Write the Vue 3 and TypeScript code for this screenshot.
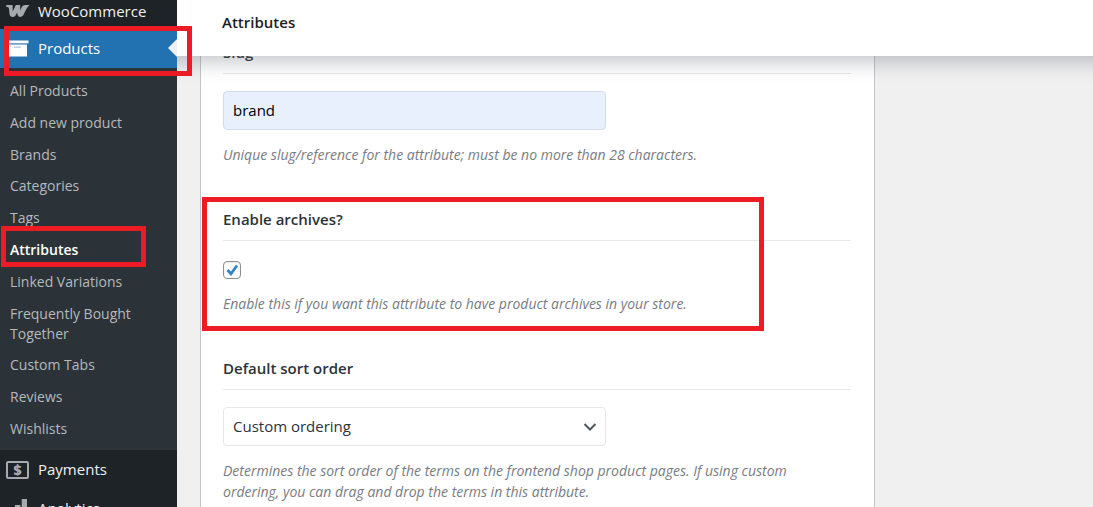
<script setup lang="ts">
import { ref } from 'vue'

interface SubItem {
  label: string
  current?: boolean
}

const subItems: SubItem[] = [
  { label: 'All Products' },
  { label: 'Add new product' },
  { label: 'Brands' },
  { label: 'Categories' },
  { label: 'Tags' },
  { label: 'Attributes', current: true },
  { label: 'Linked Variations' },
  { label: 'Frequently Bought Together' },
  { label: 'Custom Tabs' },
  { label: 'Reviews' },
  { label: 'Wishlists' },
]

const slug = ref('brand')
const archives = ref(true)
const order = ref('menu_order')
</script>

<template>
  <div class="admin">
    <nav class="sidebar" aria-label="Main menu">
      <a href="#" class="menu-item first">
        <svg class="icon" viewBox="0 0 24 20" aria-hidden="true">
          <path fill="#a7aaad" d="M0.300 3H6.600l.1 6.500L9.800 3h4.400l-.2 6.200C14.800 6 16.500 3 19 3h4.500c-3 3-4.300 6.500-6 9.800-1.400 2.800-5.400 3-6-.2l-.3-2-1.500 2.600c-1.500 2.600-5.700 2.400-6.100-.6L2.900 6.300C2.700 5.200 1.800 5 .3 5z" />
        </svg>
        <span>WooCommerce</span>
      </a>
      <a href="#" class="menu-item active">
        <svg class="icon" viewBox="0 0 24 20" aria-hidden="true">
          <path fill="#fff" d="M2 1.500h20.500V4H2zM3 5.500h18V17.500H3z" />
          <path fill="#b9d3ea" d="M2 4h20.500v.6H2zM8 7.500h7V9H8z" />
        </svg>
        <span>Products</span>
        <i class="pointer"></i>
        <i class="mark mark-products"></i>
      </a>
      <ul class="submenu">
        <li v-for="item in subItems" :key="item.label">
          <a href="#" :class="{ current: item.current }">{{ item.label }}</a>
          <i v-if="item.current" class="mark mark-attributes"></i>
        </li>
      </ul>
      <a href="#" class="menu-item">
        <svg class="icon" viewBox="0 0 24 20" aria-hidden="true">
          <rect x="1" y="2" width="21" height="16" rx="1" fill="none" stroke="#a7aaad" stroke-width="2" />
          <text x="11.500" y="15" text-anchor="middle" font-size="14" font-weight="800" fill="#a7aaad">$</text>
        </svg>
        <span>Payments</span>
      </a>
      <a href="#" class="menu-item">
        <svg class="icon" viewBox="0 0 24 20" aria-hidden="true">
          <path fill="#a7aaad" d="M2 12h5.500v8H2zM9 6h5.500v14H9zM15.700 0H21v20h-5.300z" />
        </svg>
        <span>Analytics</span>
      </a>
    </nav>

    <main class="main">
      <header class="topbar"><h1>Attributes</h1></header>
      <form class="panel" @submit.prevent>
        <section class="field">
          <label class="title" for="slug">Slug</label>
          <input id="slug" v-model="slug" class="control text" type="text" />
          <p>Unique slug/reference for the attribute; must be no more than 28 characters.</p>
        </section>
        <section class="field">
          <label class="title" for="archives">Enable archives?</label>
          <span class="check">
            <input id="archives" v-model="archives" type="checkbox" />
            <svg v-if="archives" viewBox="0 0 18 18" aria-hidden="true">
              <path d="M4.500 9l3.500 3.800L14 4.500" fill="none" stroke="#3582c4" stroke-width="2.800" />
            </svg>
          </span>
          <p>Enable this if you want this attribute to have product archives in your store.</p>
          <i class="mark mark-archives"></i>
        </section>
        <section class="field">
          <label class="title" for="order">Default sort order</label>
          <div class="select">
            <select id="order" v-model="order" class="control">
              <option value="menu_order">Custom ordering</option>
              <option value="name">Name</option>
              <option value="name_num">Name (numeric)</option>
              <option value="id">Term ID</option>
            </select>
            <svg viewBox="0 0 14 10" aria-hidden="true">
              <path d="M1.500 2l5.500 5.500L12.500 2" fill="none" stroke="#50575e" stroke-width="2" />
            </svg>
          </div>
          <p>Determines the sort order of the terms on the frontend shop product pages. If using custom ordering, you can drag and drop the terms in this attribute.</p>
        </section>
      </form>
    </main>
  </div>
</template>

<style>
body {
  margin: 0;
}
</style>

<style scoped>
.admin {
  display: flex;
  height: 100vh;
  overflow: hidden;
  background: #f0f0f1;
  font-family: "Open Sans", "Noto Sans", sans-serif;
  font-size: 14px;
  color: #2c3338;
}

.sidebar {
  position: relative;
  z-index: 3;
  flex: 0 0 177px;
  background: #1d2327;
}

.menu-item {
  position: relative;
  display: flex;
  align-items: center;
  gap: 8px;
  height: 39px;
  padding-left: 6px;
  box-sizing: border-box;
  color: #f0f0f1;
  font-size: 15px;
  line-height: 20px;
  text-decoration: none;
}

.menu-item span {
  padding-bottom: 2px;
}

.menu-item.first {
  height: 29px;
  padding-bottom: 6px;
}

.menu-item.active {
  background: #2271b1;
  color: #fff;
}

.icon {
  flex: none;
  width: 24px;
  height: 20px;
}

.pointer {
  position: absolute;
  right: 0;
  top: 10px;
  border: solid transparent;
  border-width: 9px 9px 9px 0;
  border-right-color: #f0f0f1;
}

.submenu {
  display: flex;
  flex-direction: column;
  justify-content: space-between;
  box-sizing: border-box;
  min-height: 382px;
  margin: 0;
  padding: 13px 24px 11px 10px;
  background: #2c3338;
  list-style: none;
}

.submenu li {
  position: relative;
  line-height: 20px;
}

.submenu a {
  display: block;
  color: #b4b9be;
  text-decoration: none;
}

.submenu a.current {
  color: #fff;
  font-weight: 600;
}

.mark {
  position: absolute;
  z-index: 4;
  box-sizing: border-box;
  border: 5px solid #ed1c24;
  pointer-events: none;
}

.mark-products {
  inset: -3px -15px -8px 4px;
}

.mark-attributes {
  inset: -14px 7px -7px -9px;
}

.mark-archives {
  top: -12px;
  left: -21px;
  width: 562px;
  height: 134px;
}

.main {
  position: relative;
  flex: 1;
  min-width: 0;
}

.topbar {
  position: absolute;
  z-index: 2;
  inset: 0 -20px auto -20px;
  display: flex;
  height: 56px;
  padding: 0 65px;
  background: #fff;
  box-shadow: 0 8px 16px 0 rgba(85, 93, 102, 0.3);
}

.topbar h1 {
  margin: 12px 0 0;
  color: #1e1e1e;
  font-size: 15px;
  font-weight: 600;
  line-height: 20px;
}

.panel {
  display: flex;
  flex-direction: column;
  gap: 44px;
  box-sizing: border-box;
  max-width: 675px;
  min-height: 100%;
  margin-left: 23px;
  padding: 42px 23px 20px 22px;
  border: solid #c3c4c7;
  border-width: 0 1px;
  background: #fff;
}

.field {
  position: relative;
}

.title {
  display: block;
  margin-bottom: 17px;
  padding-bottom: 11px;
  border-bottom: 1px solid #e7e8e9;
  font-size: 15px;
  font-weight: 600;
  line-height: 20px;
}

.control {
  display: block;
  box-sizing: border-box;
  width: 100%;
  max-width: 383px;
  height: 39px;
  margin: 0;
  padding: 0 9px 1px;
  border: 1px solid #e5e7e9;
  border-radius: 4px;
  background: #fff;
  color: #2c3338;
  font-family: inherit;
  font-size: 15px;
  appearance: none;
}

.control.text {
  border-color: #d3dcec;
  background: #e8f0fe;
  color: #000;
}

.select {
  position: relative;
  max-width: 383px;
}

.select svg {
  position: absolute;
  right: 9px;
  top: 15px;
  width: 14px;
  height: 10px;
  pointer-events: none;
}

.check {
  position: relative;
  display: block;
  width: 18px;
  height: 18px;
  padding-top: 3px;
}

.check input {
  display: block;
  box-sizing: border-box;
  width: 18px;
  height: 18px;
  margin: 0;
  border: 1px solid #8c8f94;
  border-radius: 4px;
  background: #fff;
  box-shadow: inset 0 1px 2px rgba(0, 0, 0, 0.1);
  appearance: none;
}

.check svg {
  position: absolute;
  inset: 3px 0 0;
  width: 18px;
  height: 18px;
  pointer-events: none;
}

.field p {
  max-width: 600px;
  margin: 14px 0 0;
  color: #787c82;
  font-style: italic;
  line-height: 21px;
}
</style>
